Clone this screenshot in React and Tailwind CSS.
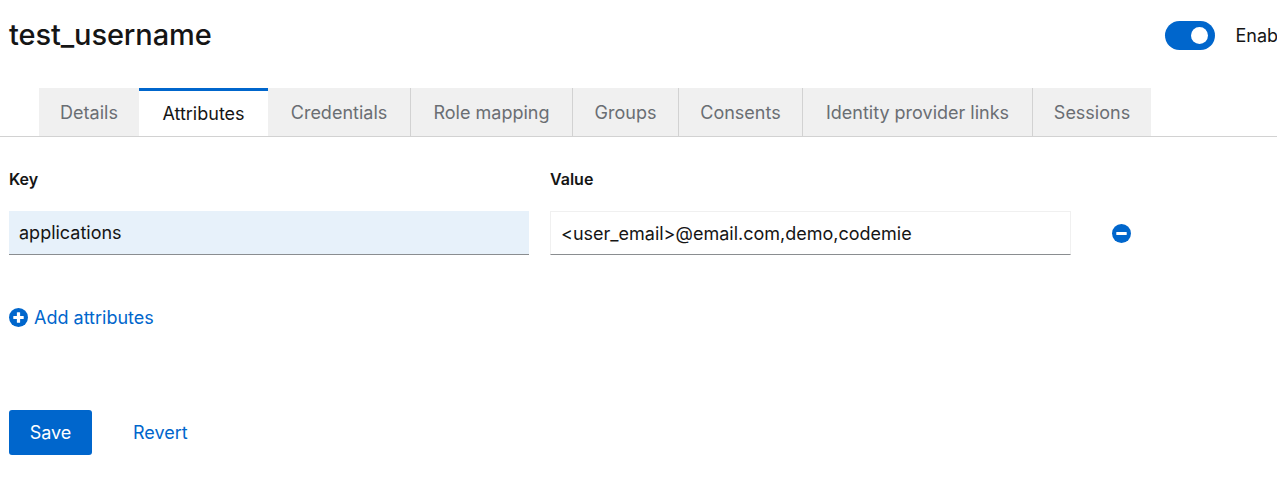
import React from 'react';

const tabs = [
  { label: 'Details', w: 'w-[100px]' },
  { label: 'Attributes', w: 'w-[129px]', active: true },
  { label: 'Credentials', w: 'w-[142px]' },
  { label: 'Role mapping', w: 'w-[162px]' },
  { label: 'Groups', w: 'w-[106px]' },
  { label: 'Consents', w: 'w-[124px]' },
  { label: 'Identity provider links', w: 'w-[230px]' },
  { label: 'Sessions', w: 'w-[119px]' },
];

const MinusCircle = () => (
  <svg width="19" height="19" viewBox="0 0 20 20">
    <circle cx="10" cy="10" r="10" fill="#0066cc" />
    <rect x="4.5" y="8.3" width="11" height="3.4" rx="0.6" fill="#fff" />
  </svg>
);

const PlusCircle = () => (
  <svg width="19" height="19" viewBox="0 0 20 20">
    <circle cx="10" cy="10" r="10" fill="#0066cc" />
    <rect x="4.5" y="8.3" width="11" height="3.4" rx="0.6" fill="#fff" />
    <rect x="8.3" y="4.5" width="3.4" height="11" rx="0.6" fill="#fff" />
  </svg>
);

const App = () => {
  return (
    <div
      className="w-[1277px] h-[487px] overflow-hidden bg-white text-[#151515]"
      style={{ fontFamily: 'Inter, "Open Sans", sans-serif' }}
    >
      {/* header */}
      <div className="flex items-center justify-between pl-[9px] h-[70px] w-[1330px]">
        <h1 className="text-[29px] font-medium tracking-[-0.1px]">test_username</h1>
        <div className="flex items-center gap-[21px] pr-[26px]">
          <div className="w-[50px] h-[29px] rounded-full bg-[#0066cc] flex items-center justify-end pr-[7px]">
            <div className="w-[17px] h-[17px] rounded-full bg-white" />
          </div>
          <span className="text-[18px]">Enabled</span>
        </div>
      </div>

      {/* tabs */}
      <div className="mt-[18px] border-b border-[#d2d2d2] pl-[39px] flex">
        {tabs.map((t, i) => (
          <div
            key={t.label}
            className={
              t.active
                ? `${t.w} h-[48px] bg-white border-t-[3px] border-[#0066cc] flex items-center justify-center text-[18px] text-[#151515]`
                : `${t.w} h-[48px] bg-[#f0f0f0] flex items-center justify-center text-[18px] text-[#6a6e73] ${
                    i > 0 && !tabs[i - 1].active ? 'border-l border-[#d2d2d2]' : ''
                  }`
            }
          >
            {t.label}
          </div>
        ))}
      </div>

      {/* attributes */}
      <div className="pl-[9px] pt-[32px]">
        <div className="flex gap-[21px] text-[16px] font-semibold h-[20px] items-center">
          <div className="w-[520px]">Key</div>
          <div className="w-[521px]">Value</div>
        </div>
        <div className="flex items-center gap-[21px] mt-[22px]">
          <div className="w-[520px] h-[44px] bg-[#e7f1fa] border-b border-[#8a8d90] flex items-center px-[10px] text-[18px]">
            applications
          </div>
          <div className="w-[521px] h-[44px] bg-white border border-[#f0f0f0] border-b-[#8a8d90] flex items-center px-[10px] text-[18px]">
            &lt;user_email&gt;@email.com,demo,codemie
          </div>
          <div className="ml-[20px] flex items-center">
            <MinusCircle />
          </div>
        </div>

        <div className="flex items-center gap-[6px] mt-[49px] text-[#0066cc] text-[18px]">
          <PlusCircle />
          <span>Add attributes</span>
        </div>

        <div className="flex items-center gap-[41px] mt-[79px]">
          <button className="w-[83px] h-[45px] rounded-[3px] bg-[#0066cc] text-white text-[18px]">
            Save
          </button>
          <button className="text-[#0066cc] text-[18px]">Revert</button>
        </div>
      </div>
    </div>
  );
};

export default App;
